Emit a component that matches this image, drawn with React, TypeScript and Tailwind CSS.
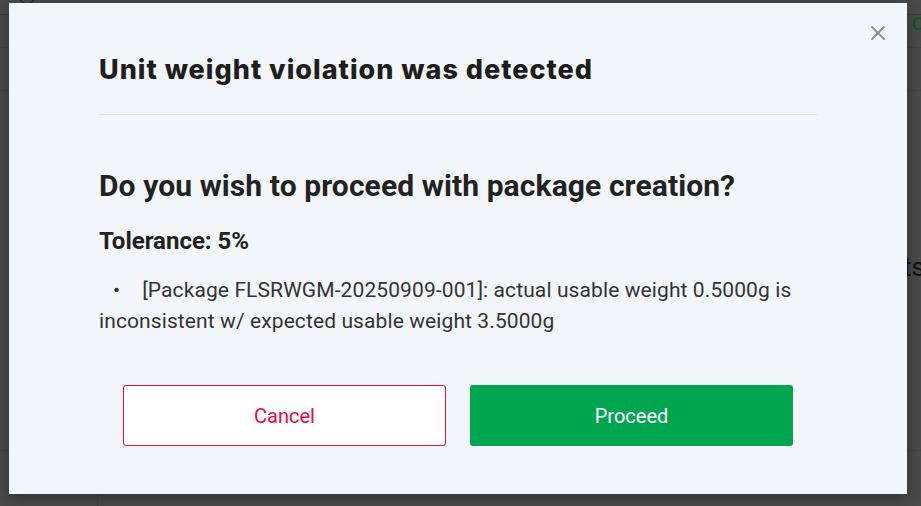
import { X } from "lucide-react";

export default function App() {
  return (
    <div className="relative h-[506px] w-[921px] overflow-hidden bg-[#4b4b4b] font-['Roboto',sans-serif]">
      {/* page behind the overlay */}
      <div className="absolute inset-0 text-[#1a1a1a]">
        <div className="absolute left-[18px] top-[-14px] h-[18px] w-[18px] rounded-full border border-[#222]" />
        <div className="absolute left-0 top-[14px] h-px w-full bg-[#3f3f3f]" />
        <div className="absolute left-0 top-[47px] h-px w-full bg-[#444]" />
        <div className="absolute left-0 top-[90px] h-px w-full bg-[#444]" />
        <div className="absolute left-0 top-[450px] h-px w-full bg-[#444]" />
        <div className="absolute left-[97px] top-[450px] h-[60px] w-px bg-[#444]" />
        <div className="absolute right-[-4px] top-[4px] text-[24px] text-[#0a5a26]">d</div>
        <div className="absolute left-[903px] top-[248px] text-[26px] text-[#111]">ts</div>
      </div>

      <div className="relative ml-[9px] mt-[3px] h-[491px] w-[898px] bg-[#f3f6f9] px-[90px] pt-[47px] shadow-[0_4px_16px_rgba(0,0,0,0.4)]">
        <button className="absolute right-[17px] top-[18px] text-[#8a8f94]">
          <X size={24} strokeWidth={1.8} />
        </button>

        <h1 className="font-['Inter',sans-serif] text-[27px] font-extrabold leading-[40px] tracking-[1px] text-[#1e1e1e]">
          Unit weight violation was detected
        </h1>
        <div className="mt-[24px] h-px w-full bg-[#dde2e7]" />

        <h2 className="mt-[53px] text-[30px] font-bold leading-[36px] tracking-[0.1px] text-[#222]">
          Do you wish to proceed with package creation?
        </h2>
        <p className="mt-[23px] text-[24px] font-bold leading-[28px] text-[#222]">
          Tolerance: 5%
        </p>
        <ul className="mt-[20px] text-[21px] leading-[31px] tracking-[0.1px] text-[#333]">
          <li>
            <span className="ml-[14px] mr-[22px]">•</span>
            [Package FLSRWGM-20250909-001]: actual usable weight 0.5000g is inconsistent w/ expected usable weight 3.5000g
          </li>
        </ul>

        <div className="mt-[48px] flex justify-center gap-[24px]">
          <button className="h-[61px] w-[323px] rounded-[3px] border border-[#ec0a3a] bg-white text-[20px] text-[#ec0a3a]">
            Cancel
          </button>
          <button className="h-[61px] w-[323px] rounded-[3px] bg-[#00a64f] text-[20px] text-white">
            Proceed
          </button>
        </div>
      </div>
    </div>
  );
}
